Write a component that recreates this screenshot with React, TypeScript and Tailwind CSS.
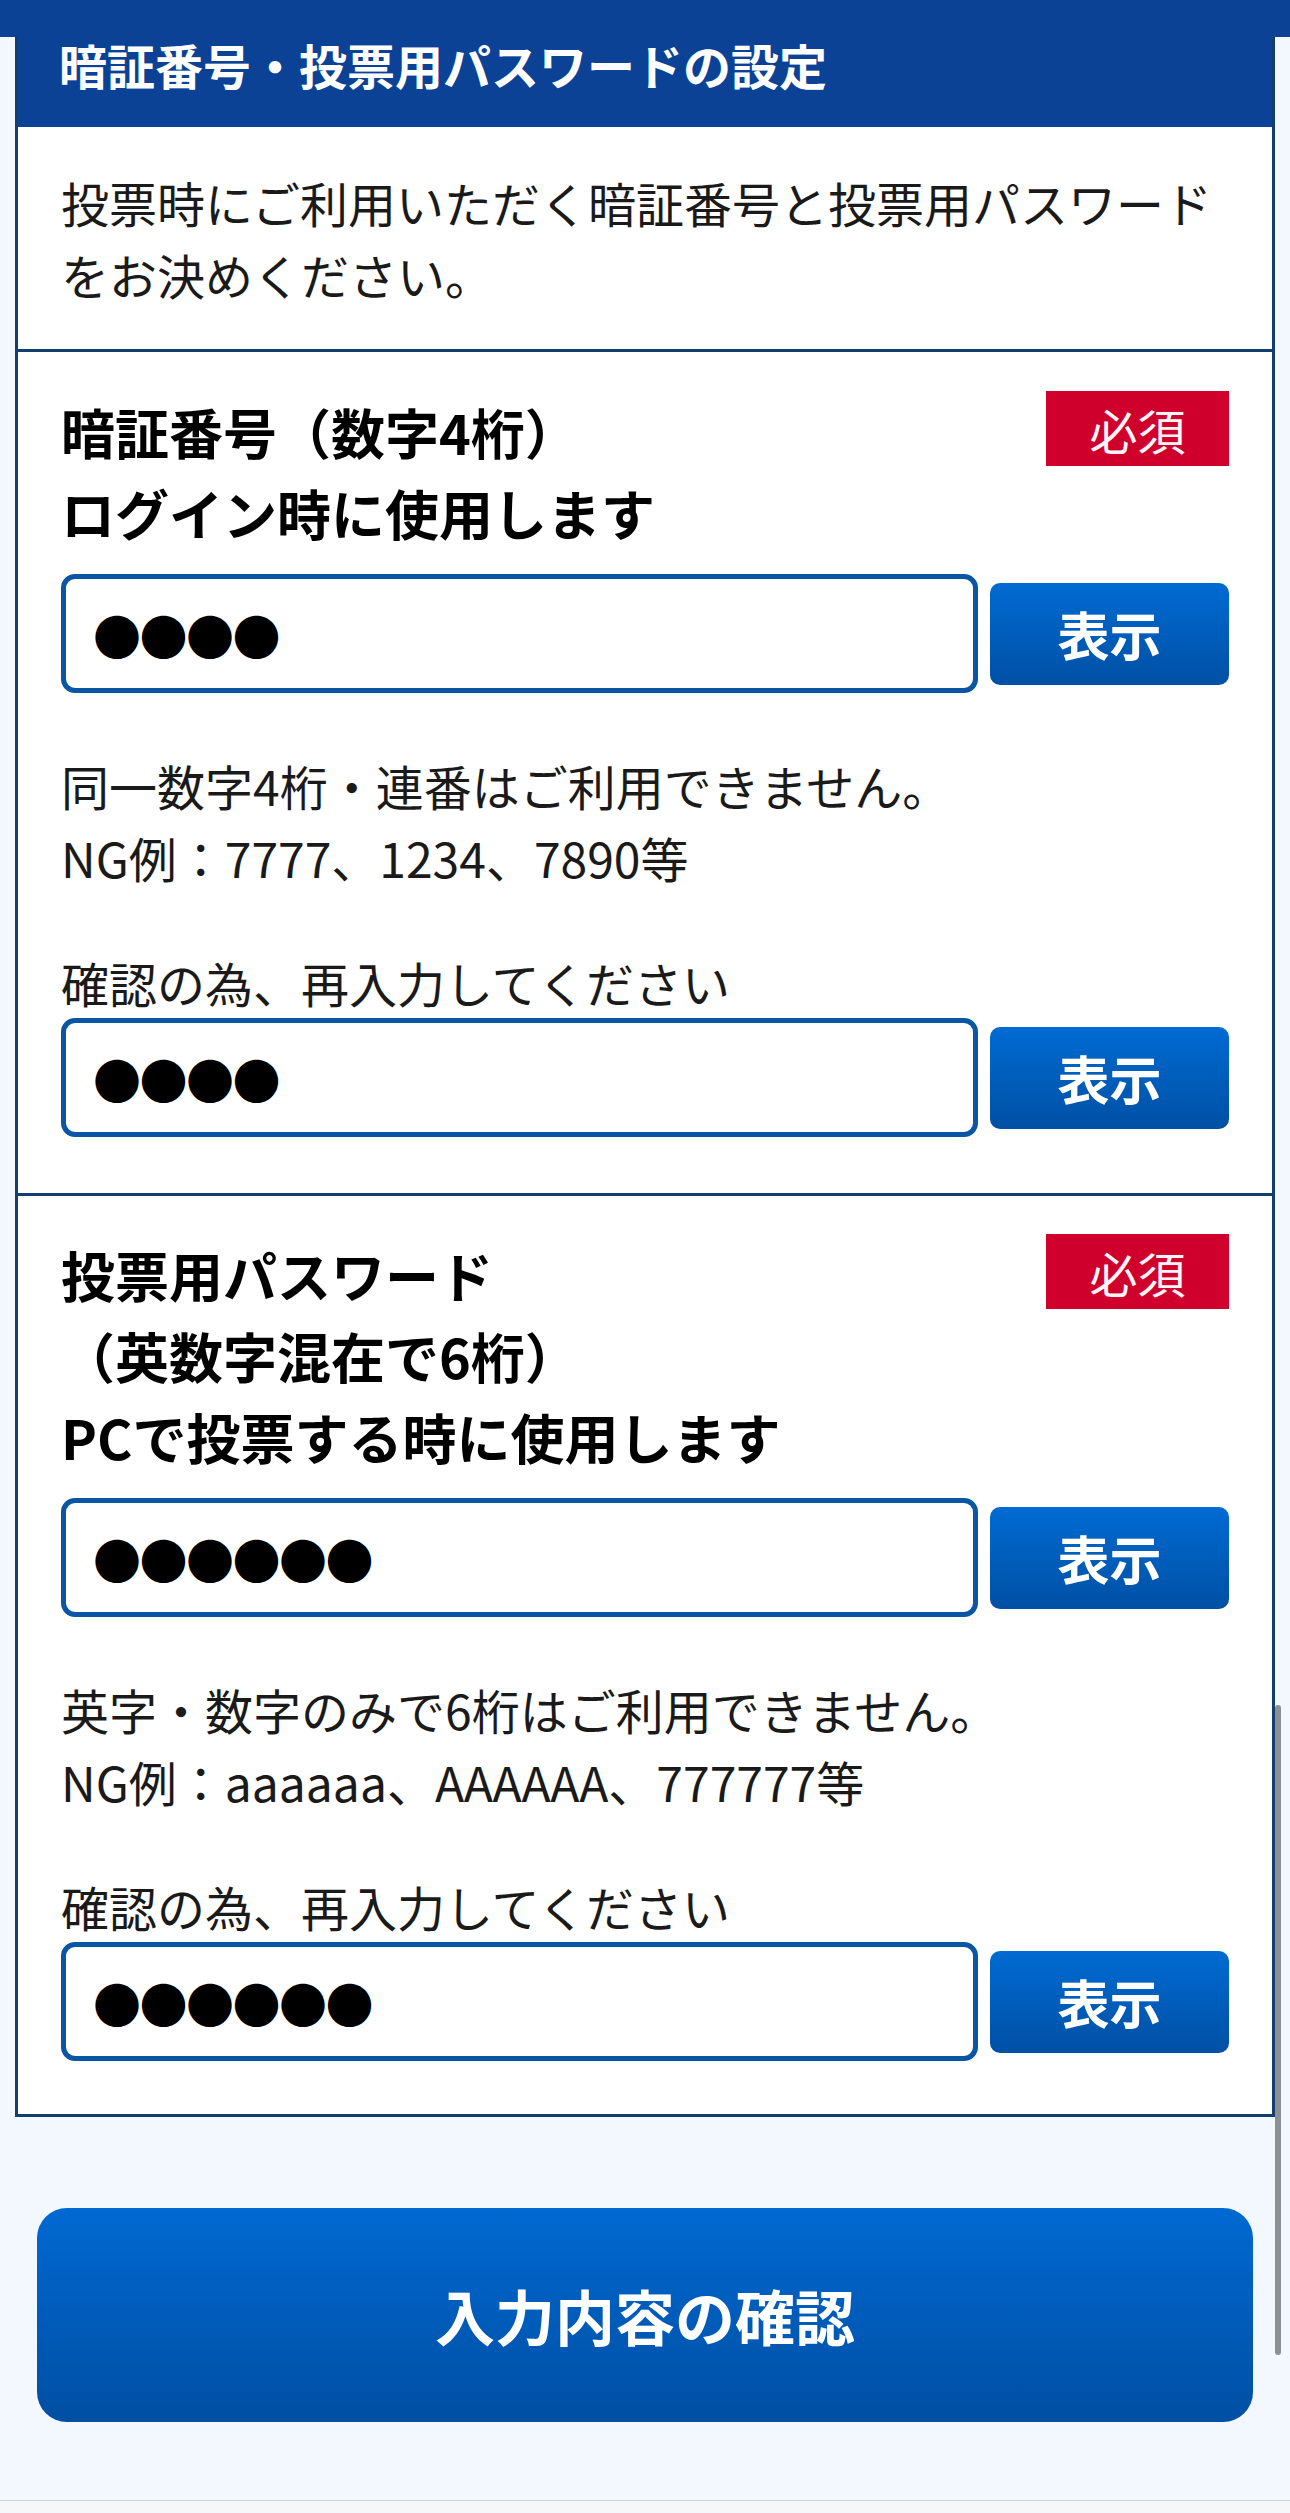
import React from 'react';

const FONT = "font-['Noto_Sans_CJK_JP','Noto_Sans',sans-serif]";

function RequiredBadge() {
  return (
    <div className="flex h-[75px] w-[183px] shrink-0 items-center justify-center bg-[#d0002d] text-[48px] leading-none text-[#fff5f8]">
      必須
    </div>
  );
}

function SecretInput({ length }: { length: number }) {
  return (
    <div className="flex items-center gap-[12px]">
      <div className="flex h-[119px] flex-1 items-center rounded-[14px] border-[5px] border-[#0a55a4] bg-white pl-[27px]">
        <span className="text-[48px] leading-none tracking-[-1.5px] text-black">
          {'●'.repeat(length)}
        </span>
      </div>
      <button
        type="button"
        className="h-[102px] w-[239px] shrink-0 rounded-[10px] bg-linear-to-b from-[#006bd3] to-[#0050a4] text-[52px] font-bold leading-none text-white"
      >
        表示
      </button>
    </div>
  );
}

interface SectionProps {
  title: string[];
  hint: string[];
  length: number;
  pt: string;
  pb: string;
  last?: boolean;
}

function SecretSection({ title, hint, length, pt, pb, last }: SectionProps) {
  return (
    <section className={`${pt} ${pb} px-[43px] ${last ? '' : 'border-b-[3px] border-[#123f6e]'}`}>
      <div className="flex items-start justify-between">
        <h3 className="text-[54px] font-bold leading-[81px] text-black">
          {title.map((line) => (
            <div key={line}>{line}</div>
          ))}
        </h3>
        <RequiredBadge />
      </div>

      <div className="mt-[21px]">
        <SecretInput length={length} />
      </div>

      <p className="mt-[56px] text-[48px] leading-[72px] text-[#1a1a1a]">
        {hint[0]}
        <br />
        {hint[1]}
      </p>

      <p className="mt-[53px] text-[48px] leading-[72px] text-[#1a1a1a]">確認の為、再入力してください</p>
      <SecretInput length={length} />
    </section>
  );
}

export default function App() {
  return (
    <div className={`relative min-h-[2513px] overflow-hidden bg-[#f2f8fd] ${FONT}`}>
      <div className="h-[37px] bg-[#0b4296]" />

      <div className="mx-[15px] border-x-[3px] border-b-[3px] border-[#123f6e] bg-white">
        <h2 className="h-[90px] bg-[#0b4296] pl-[41px] pt-[3px] text-[48px] font-bold leading-[48px] text-white">
          暗証番号・投票用パスワードの設定
        </h2>

        <p className="border-b-[3px] border-[#123f6e] px-[43px] pb-[39px] pt-[39px] text-[48px] leading-[72px] text-[#1a1a1a]">
          投票時にご利用いただく暗証番号と投票用パスワード
          <br />
          をお決めください。
        </p>

        <SecretSection
          title={['暗証番号（数字4桁）', 'ログイン時に使用します']}
          hint={['同一数字4桁・連番はご利用できません。', 'NG例：7777、1234、7890等']}
          length={4}
          pt="pt-[39px]"
          pb="pb-[56px]"
        />

        <SecretSection
          title={['投票用パスワード', '（英数字混在で6桁）', 'PCで投票する時に使用します']}
          hint={['英字・数字のみで6桁はご利用できません。', 'NG例：aaaaaa、AAAAAA、777777等']}
          length={6}
          pt="pt-[38px]"
          pb="pb-[53px]"
          last
        />
      </div>

      <div className="px-[37px] pt-[91px]">
        <button
          type="button"
          className="flex h-[214px] w-full items-center justify-center rounded-[30px] bg-linear-to-b from-[#0069d2] to-[#004fa3] text-[60px] font-bold leading-none text-white"
        >
          入力内容の確認
        </button>
      </div>

      <div className="mt-[78px] h-[12px] border-t border-[#cfd3d6] bg-[#f6f7f8]" />

      <div className="absolute left-[1275px] top-[1705px] h-[650px] w-[6px] rounded-full bg-[#8d9093]" />
    </div>
  );
}
